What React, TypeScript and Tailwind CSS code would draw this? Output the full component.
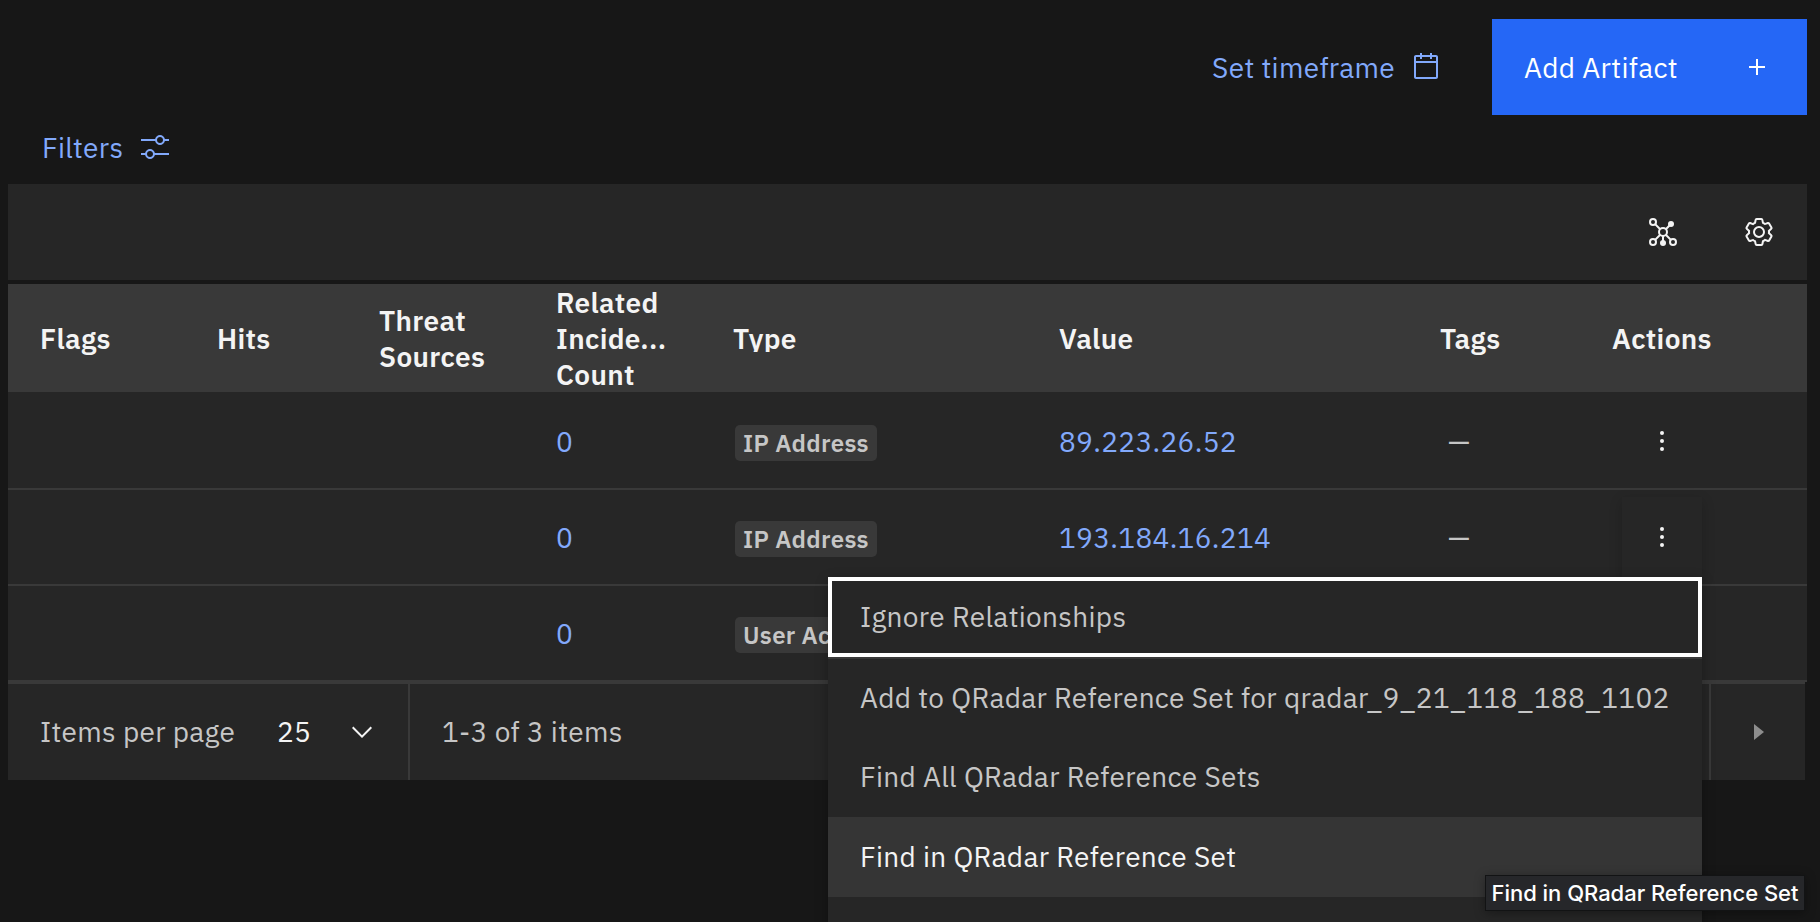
import type { ReactNode } from "react";

function Icon({ children, className = "" }: { children: ReactNode; className?: string }) {
  return (
    <svg viewBox="0 0 32 32" fill="currentColor" aria-hidden="true" className={`size-8 shrink-0 ${className}`}>
      {children}
    </svg>
  );
}

const CalendarIcon = () => (
  <Icon>
    <path d="M26,4h-4V2h-2v2h-8V2h-2v2H6C4.9,4,4,4.9,4,6v20c0,1.1,0.9,2,2,2h20c1.1,0,2-0.9,2-2V6C28,4.9,27.1,4,26,4z M26,26H6V12h20V26z M26,10H6V6h4v2h2V6h8v2h2V6h4V10z" />
  </Icon>
);

const AddIcon = () => (
  <Icon>
    <path d="M17 15V8h-2v7H8v2h7v7h2v-7h7v-2z" />
  </Icon>
);

const AdjustIcon = () => (
  <Icon>
    <path d="M30 8h-4.1c-.5-2.3-2.5-4-4.9-4s-4.4 1.7-4.9 4H2v2h14.1c.5 2.3 2.5 4 4.9 4s4.4-1.7 4.9-4H30V8zm-9 4c-1.7 0-3-1.3-3-3s1.3-3 3-3 3 1.3 3 3-1.3 3-3 3zM2 24h4.1c.5 2.3 2.5 4 4.9 4s4.4-1.7 4.9-4H30v-2H15.9c-.5-2.3-2.5-4-4.9-4s-4.4 1.7-4.9 4H2v2zm9-4c1.7 0 3 1.3 3 3s-1.3 3-3 3-3-1.3-3-3 1.3-3 3-3z" />
  </Icon>
);

const NetworkIcon = () => (
  <Icon>
    <g fill="none" stroke="currentColor" strokeWidth="2">
      <circle cx="6" cy="6" r="3" />
      <circle cx="6" cy="26" r="3" />
      <circle cx="26" cy="26" r="3" />
      <circle cx="16" cy="16" r="4" />
      <path d="M8.1 8.1 13.2 13.2M18.8 13.2 23 9M13.2 18.8 8.1 23.9M18.8 18.8 23.9 23.9M16 20V25" />
    </g>
    <circle cx="24" cy="8" r="3" />
    <circle cx="16" cy="27" r="3" />
  </Icon>
);

const SettingsIcon = () => (
  <Icon>
    <path d="M27,16.76c0-.25,0-.5,0-.76s0-.51,0-.77l1.92-1.68A2,2,0,0,0,29.3,11L26.94,7a2,2,0,0,0-1.73-1,2,2,0,0,0-.64.1l-2.43.82a11.35,11.35,0,0,0-1.31-.75l-.51-2.52a2,2,0,0,0-2-1.61H13.64a2,2,0,0,0-2,1.61l-.51,2.52a11.48,11.48,0,0,0-1.32.75L7.43,6.06A2,2,0,0,0,6.79,6,2,2,0,0,0,5.06,7L2.7,11a2,2,0,0,0,.41,2.51L5,15.24c0,.25,0,.5,0,.76s0,.51,0,.77L3.11,18.45A2,2,0,0,0,2.7,21L5.06,25a2,2,0,0,0,1.73,1,2,2,0,0,0,.64-.1l2.43-.82a11.35,11.35,0,0,0,1.31.75l.51,2.52a2,2,0,0,0,2,1.61h4.72a2,2,0,0,0,2-1.61l.51-2.52a11.48,11.48,0,0,0,1.32-.75l2.42.82a2,2,0,0,0,.64.1,2,2,0,0,0,1.73-1L29.3,21a2,2,0,0,0-.41-2.51ZM25.21,24l-3.43-1.16a8.86,8.86,0,0,1-2.71,1.57L18.36,28H13.64l-.71-3.55a9.36,9.36,0,0,1-2.7-1.57L6.79,24,4.43,20l2.72-2.4a8.9,8.9,0,0,1,0-3.13L4.43,12,6.79,8l3.43,1.16a8.86,8.86,0,0,1,2.71-1.57L13.64,4h4.72l.71,3.55a9.36,9.36,0,0,1,2.7,1.57L25.21,8,27.57,12l-2.72,2.4a8.9,8.9,0,0,1,0,3.13L27.57,20Z" />
    <path d="M16,22a6,6,0,1,1,6-6A5.94,5.94,0,0,1,16,22Zm0-10a3.91,3.91,0,0,0-4,4,3.91,3.91,0,0,0,4,4,3.91,3.91,0,0,0,4-4A3.91,3.91,0,0,0,16,12Z" />
  </Icon>
);

const OverflowIcon = () => (
  <Icon>
    <circle cx="16" cy="8" r="2" />
    <circle cx="16" cy="16" r="2" />
    <circle cx="16" cy="24" r="2" />
  </Icon>
);

const COLS = "grid grid-cols-[177px_162px_177px_177px_326px_381px_172px_227px] items-center";

const headers = ["Flags", "Hits", "Threat Sources", "Related Incidents Count", "Type", "Value", "Tags", "Actions"];

const rows = [
  { count: "0", type: "IP Address", value: "89.223.26.52" },
  { count: "0", type: "IP Address", value: "193.184.16.214", open: true },
  { count: "0", type: "User Account", value: "" },
];

function HeaderLabel({ name }: { name: string }) {
  if (name === "Related Incidents Count") {
    return (
      <>
        <span className="block">Related</span>
        <span className="block">Incide...</span>
        <span className="block">Count</span>
      </>
    );
  }
  if (name === "Threat Sources") return <span className="block w-28">{name}</span>;
  if (name === "Type") return <span className="-mt-[5px] block h-[31px] overflow-hidden">{name}</span>;
  return <>{name}</>;
}

function MenuItem({ label, className = "" }: { label: string; className?: string }) {
  return <button className={`flex h-20 w-full items-center pl-8 text-left whitespace-nowrap ${className}`}>{label}</button>;
}

export default function App() {
  return (
    <div className="relative h-[922px] w-[1820px] overflow-hidden bg-[#171717] font-['IBM_Plex_Sans','Noto_Sans',sans-serif] text-[28px] leading-9 tracking-[0.32px] text-[#c6c6c6]">
      <div className="flex flex-col pt-[19px] pr-[13px] pl-2">
        <div className="flex h-24 justify-end">
          <button className="mr-[50px] flex items-center gap-[15px] text-[#82a9fb]">
            <span className="pt-0.5">Set timeframe</span>
            <CalendarIcon />
          </button>
          <button className="flex w-[315px] items-center justify-between bg-[#2567f6] pr-[34px] pl-8 text-white">
            <span className="pt-0.5">Add Artifact</span>
            <AddIcon />
          </button>
        </div>

        <button className="flex h-[69px] items-center self-start pb-[5px] pl-[34px] text-[#82a9fb]">
          <span className="w-[97px] pt-0.5 text-left">Filters</span>
          <AdjustIcon />
        </button>

        <div className="flex h-24 items-center justify-end gap-16 bg-[#262626] pr-8 text-[#f4f4f4]">
          <NetworkIcon />
          <SettingsIcon />
        </div>

        <div className={`mt-1 h-[110px] border-b-2 border-[#262626] bg-[#393939] font-semibold text-[#f4f4f4] ${COLS}`}>
          {headers.map((h) => (
            <div key={h} className="pt-px pl-8">
              <HeaderLabel name={h} />
            </div>
          ))}
        </div>

        {rows.map((r, i) => (
          <div key={i} className={`h-24 border-y-2 border-t-[#262626] border-b-[#393939] bg-[#262626] ${COLS}`}>
            <span />
            <span />
            <span />
            <span className="pl-8 text-[#82a9fb]">{r.count}</span>
            <span className="flex pl-[34px]">
              <span className="mt-0.5 h-9 rounded-[5px] bg-[#393939] px-2 text-[24px] leading-9 font-semibold tracking-[0.32px]">
                {r.type}
              </span>
            </span>
            <span className="pl-8 text-[#82a9fb]">{r.value}</span>
            <span className="pl-10">—</span>
            <span className="pl-[42px]">
              <button
                className={`-mt-0.5 flex size-20 items-center justify-center bg-[#262626] text-[#f4f4f4] ${
                  r.open ? "shadow-[0_4px_12px_rgba(0,0,0,0.2)]" : ""
                }`}
              >
                <OverflowIcon />
              </button>
            </span>
          </div>
        ))}

        <div className="mr-0.5 flex h-[98px] items-center border-t-2 border-[#393939] bg-[#262626]">
          <div className="flex h-full w-[402px] items-center border-r-2 border-[#393939] pl-8">
            <span className="w-[237px]">Items per page</span>
            <span className="w-[69px] text-[#f4f4f4]">25</span>
            <Icon className="text-[#f4f4f4]">
              <path d="M16 22 6 12 7.4 10.6 16 19.2 24.6 10.6 26 12z" />
            </Icon>
          </div>
          <span className="pl-8">1-3 of 3 items</span>
          <div className="ml-auto flex h-full w-24 items-center border-l-2 border-[#393939] pl-[31px] text-[#8d8d8d]">
            <Icon>
              <path d="M12 8 22 16 12 24z" />
            </Icon>
          </div>
        </div>
      </div>

      <div className="absolute top-[577px] left-[828px] w-[874px] bg-[#262626] shadow-[0_4px_12px_rgba(0,0,0,0.3)]">
        <MenuItem label="Ignore Relationships" className="outline-4 -outline-offset-4 outline-white" />
        <MenuItem label="Add to QRadar Reference Set for qradar_9_21_118_188_1102" className="border-t-2 border-[#393939]" />
        <MenuItem label="Find All QRadar Reference Sets" />
        <MenuItem label="Find in QRadar Reference Set" className="bg-[#353535] text-[#f4f4f4]" />
        <MenuItem label="" />
      </div>

      <div className="absolute top-[875px] left-[1485px] flex h-9 w-80 items-center justify-center border border-[#121314] bg-[#26272a] font-['Inter',sans-serif] text-[22px] font-medium tracking-[-0.03px] whitespace-nowrap text-white shadow-[0_2px_10px_rgba(0,0,0,0.35)]">
        Find in QRadar Reference Set
      </div>
    </div>
  );
}
